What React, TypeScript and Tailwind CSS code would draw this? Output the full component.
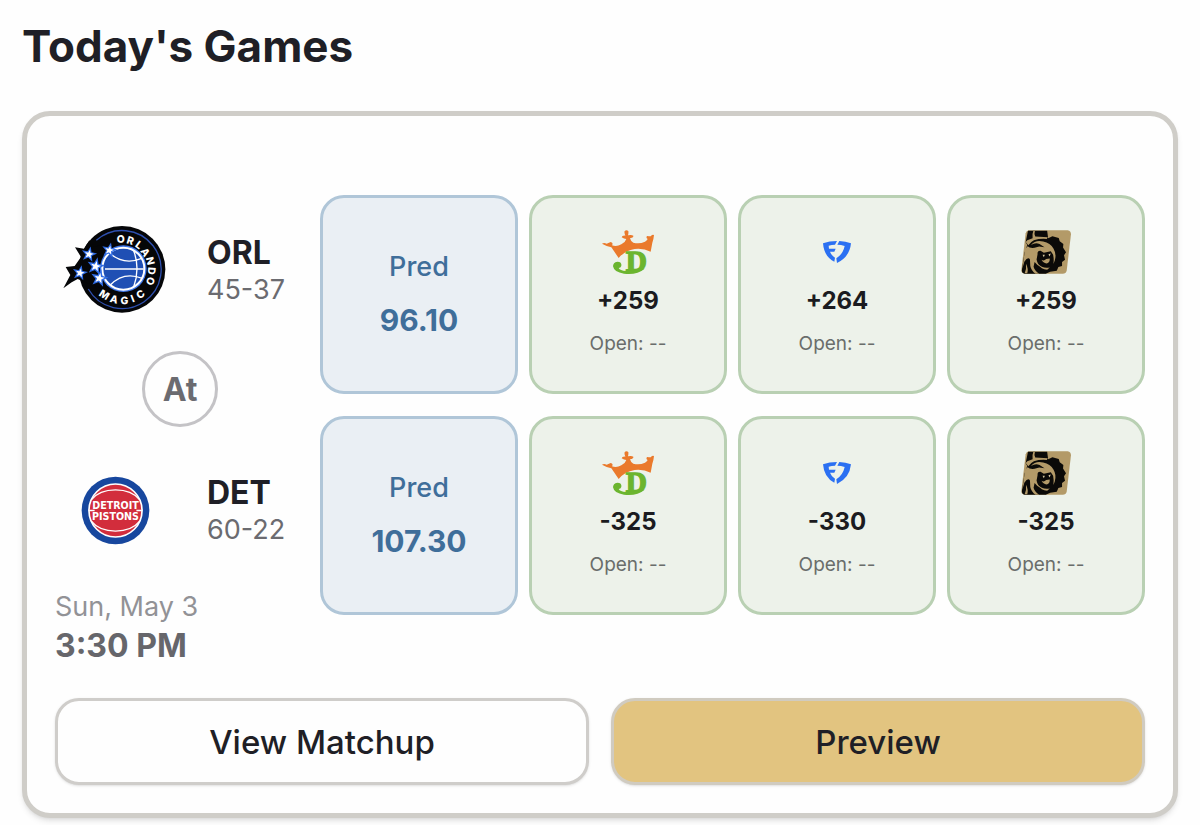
import type { ReactNode } from "react";

const magicLetters: [string, number, number, number][] = [
  ["O", 213, 72, -4],
  ["R", 242, 77, 18],
  ["L", 268, 90, 36],
  ["A", 287, 112, 56],
  ["N", 302, 138, 76],
  ["D", 306, 168, 94],
  ["O", 302, 198, 112],
  ["M", 164, 239, 32],
  ["A", 193, 253, 15],
  ["G", 224, 257, -4],
  ["I", 249, 251, -21],
  ["C", 272, 238, -36],
];

function Star({ x, y, r }: { x: number; y: number; r: number }) {
  return (
    <path
      transform={`translate(${x} ${y}) rotate(12) scale(${r})`}
      d="M0-1 .25-.32 .95-.31 .4.13 .59.81 0 .42-.59.81-.4.13-.95-.31-.25-.32Z"
    />
  );
}

function MagicLogo() {
  return (
    <svg viewBox="40 30 312 270" className="h-[90px] w-26" role="img" aria-label="Orlando Magic">
      <circle cx="217" cy="163" r="130" fill="#050608" />
      <path
        d="M76 97 103 101 119 76 134 96 185 80 185 230 105 201 84 192 66 202 41 220 62 180 48 156 75 153 94 126Z"
        fill="#050608"
      />
      <path d="M140 76A117 117 0 1 1 116 222" fill="none" stroke="#2e4fae" strokeWidth="4" />
      <circle cx="221" cy="161" r="70" fill="#3f78ea" />
      <circle cx="221" cy="161" r="63" fill="#1f4fb4" stroke="#fff" strokeWidth="6" />
      <g fill="none" stroke="#fff" strokeWidth="4">
        <path d="M166 162H282M180 115Q224 152 276 130M182 210Q222 168 278 190M252 107Q272 160 252 216" />
      </g>
      <g fill="#fff" stroke="#2f6ce5" strokeWidth=".5" strokeLinejoin="miter" paintOrder="stroke">
        <Star x={118} y={118} r={14} />
        <Star x={91} y={174} r={14} />
        <Star x={179} y={106} r={14} />
        <Star x={138} y={154} r={16} />
        <Star x={149} y={190} r={16} />
      </g>
      <g fill="#fff" fontFamily="Inter, sans-serif" fontWeight="800" fontSize="31" textAnchor="middle">
        {magicLetters.map(([letter, x, y, angle], i) => (
          <text key={i} transform={`translate(${x} ${y}) rotate(${angle})`} dy="11">
            {letter}
          </text>
        ))}
      </g>
    </svg>
  );
}

function PistonsLogo() {
  return (
    <svg viewBox="29 30 208 208" className="size-[69px]" role="img" aria-label="Detroit Pistons">
      <circle cx="133" cy="134" r="102" fill="#17479e" />
      <circle cx="133" cy="134" r="80" fill="#d22d3c" stroke="#fff" strokeWidth="5" />
      <g fill="none" stroke="#fff" strokeWidth="4">
        <path d="M60 102Q84 72 133 72T206 102M60 166Q84 196 133 196T206 166M52 134H70M196 134H214" />
      </g>
      <g
        fill="#fff"
        fontFamily="'Liberation Sans Narrow', 'DejaVu Sans Condensed', sans-serif"
        fontWeight="700"
        fontSize="32"
        textAnchor="middle"
      >
        <text x="133" y="129">DETROIT</text>
        <text x="133" y="163">PISTONS</text>
      </g>
    </svg>
  );
}

function DraftKingsLogo() {
  return (
    <svg viewBox="0 0 156 132" className="h-11 w-[52px] overflow-visible" role="img" aria-label="DraftKings">
      <path
        d="M0 41Q6 37 14 41L26 36Q35 39 30 46Q44 51 58 43Q70 37 73 27Q66 27 59 22Q60 16 70 17Q66 8 68 3Q73-2 79 3Q80 10 78 16Q88 13 94 17Q96 22 84 25Q86 34 94 38Q112 43 129 35Q136 31 137 27Q131 24 135 18Q141 19 146 19Q150 12 156 15Q155 27 151 38L146 65Q124 54 98 57Q68 62 50 84L28 52Q14 49 0 41Z"
        fill="#ea7a2c"
      />
      <text
        x="103"
        y="123"
        textAnchor="middle"
        fontFamily="'Liberation Serif', serif"
        fontWeight="700"
        fontSize="88"
        fill="#6bb52f"
        stroke="#6bb52f"
        strokeWidth="4"
      >
        D
      </text>
      <path
        d="M58 108Q60 95 46 95Q33 97 33 109Q36 127 66 131Q104 136 128 116L118 114Q98 124 72 123Q54 122 50 114Q56 114 58 108Z"
        fill="#6bb52f"
      />
    </svg>
  );
}

function FanDuelLogo() {
  return (
    <svg viewBox="0 0 84 66" className="h-[22px] w-7" role="img" aria-label="FanDuel">
      <g fill="#2b70f2">
        <path d="M0 7Q19 0 42 0L36 11Q26 11 17 14L18 23H38L34 32H21Q25 43 36 50L34 62Q3 47 0 7Z" />
        <path d="M49 0Q68 1 84 7Q80 48 42 66L40 52Q60 39 65 15Q54 11 43 11Z" />
      </g>
    </svg>
  );
}

function BetMGMLogo() {
  return (
    <svg viewBox="17 15 151 133" className="h-11 w-[50px]" role="img" aria-label="BetMGM">
      <path d="M40 16H158Q168 18 168 28L155 138Q153 147 143 147H28Q17 146 18 136L31 25Q33 17 40 16Z" fill="#b39a68" />
      <path
        d="M38 17H96L99 40 112 34 131 39 134 49 145 57 144 68 153 82 147 91 150 105 141 112 141 124 130 127 125 138 105 141 92 147H28Q18 146 20 134L28 82 36 60 31 52Z"
        fill="#0b0a08"
      />
      <g fill="#b39a68">
        <path d="M59 18Q56 26 60 35L98 37 95 42Q74 40 56 46 46 51 39 61L31 51 36 46 52 40Q50 28 54 18Z" />
        <path d="M28 82Q27 72 37 64 43 71 58 69L72 65 88 67 73 57Q60 52 47 60 61 44 84 50 106 55 115 71 125 88 119 107L115 118Q117 104 114 90L107 79 86 84 76 78Q66 77 67 88L64 104Q67 121 81 129 66 124 58 112L55 126Q58 138 72 147H61Q48 139 45 124L44 104Q38 95 27 111L21 131Z" />
        <path d="M79 105Q86 110 93 103L104 101Q104 115 94 116 84 115 79 105Z" />
        <path d="M68 118Q82 132 104 128L96 135Q78 135 68 118ZM32 117Q34 132 28 146H36Q40 132 32 117Z" />
      </g>
      <path d="M82 90 86 97 89 90ZM100 88 103 95 107 86Z" fill="#d8c8a0" />
    </svg>
  );
}

type Book = { logo: ReactNode; line: string };
type Team = { logo: ReactNode; code: string; record: string; pred: string; books: Book[] };

const teams: Team[] = [
  {
    logo: <MagicLogo />,
    code: "ORL",
    record: "45-37",
    pred: "96.10",
    books: [
      { logo: <DraftKingsLogo />, line: "+259" },
      { logo: <FanDuelLogo />, line: "+264" },
      { logo: <BetMGMLogo />, line: "+259" },
    ],
  },
  {
    logo: <PistonsLogo />,
    code: "DET",
    record: "60-22",
    pred: "107.30",
    books: [
      { logo: <DraftKingsLogo />, line: "-325" },
      { logo: <FanDuelLogo />, line: "-330" },
      { logo: <BetMGMLogo />, line: "-325" },
    ],
  },
];

function TeamRow({ team }: { team: Team }) {
  return (
    <div className="flex h-[90px] items-center gap-8">
      <div className="flex w-[120px] shrink-0 justify-center">{team.logo}</div>
      <div className="pt-0.5">
        <h2 className="text-[32px] leading-[38px] font-bold text-[#1f1f26]">{team.code}</h2>
        <p className="text-[27px] leading-[36px] text-[#6b6b70]">{team.record}</p>
      </div>
    </div>
  );
}

function PredTile({ value }: { value: string }) {
  return (
    <div className="flex h-[199px] flex-col items-center gap-4 rounded-3xl border-3 border-[#b0c6d8] bg-[#eaeff4] pt-[51px]">
      <span className="text-[27px] leading-[36px] font-medium text-[#3f6e9a]">Pred</span>
      <span className="text-[30px] leading-[38px] font-bold text-[#3f6e9a]">{value}</span>
    </div>
  );
}

function OddsTile({ book }: { book: Book }) {
  return (
    <div className="flex h-[199px] flex-col items-center rounded-3xl border-3 border-[#b9d0b3] bg-[#edf2ea] pt-8">
      <div className="flex h-11 items-center">{book.logo}</div>
      <span className="mt-3 text-[24px] leading-[30px] font-bold text-[#1b1b20]">{book.line}</span>
      <span className="mt-4 text-[19px] leading-[24px] text-[#6a6d6b]">Open: --</span>
    </div>
  );
}

export default function App() {
  return (
    <main className="min-h-screen bg-[#fefefe] px-[22px] pt-5 font-['Inter',sans-serif]">
      <h1 className="text-[44px] leading-[52px] font-bold text-[#1f1f26]">Today's Games</h1>
      <article className="mt-[39px] rounded-[28px] border-5 border-[#cfcdc8] bg-[#fefefe] px-7 pt-[79px] pb-7 shadow-md">
        <div className="flex">
          <section className="w-[265px] shrink-0 pt-[30px]">
            <TeamRow team={teams[0]} />
            <div className="mt-9 mb-[38px] ml-[87px] flex size-[76px] items-center justify-center rounded-full border-3 border-[#c4c3c6] pt-0.5 text-[32px] font-bold text-[#6b6b70]">
              At
            </div>
            <TeamRow team={teams[1]} />
            <p className="mt-[34px] text-[27px] leading-[36px] text-[#929296]">Sun, May 3</p>
            <p className="text-[32px] leading-[41px] font-bold text-[#66666b]">3:30 PM</p>
          </section>
          <section className="grid grow grid-cols-4 content-start gap-x-[11px] gap-y-[22px]">
            {teams.flatMap((team) => [
              <PredTile key={team.code} value={team.pred} />,
              ...team.books.map((book, i) => <OddsTile key={team.code + i} book={book} />),
            ])}
          </section>
        </div>
        <div className="mt-8 grid grid-cols-2 gap-[22px]">
          <button className="h-[87px] rounded-3xl border-3 border-[#cfcdca] bg-[#fefefe] pt-0.5 text-[33px] font-medium text-[#1f1f26] shadow-sm">
            View Matchup
          </button>
          <button className="h-[87px] rounded-3xl border-3 border-[#d0cbc0] bg-[#e2c480] pt-0.5 text-[33px] font-medium text-[#1f1f26] shadow-sm">
            Preview
          </button>
        </div>
      </article>
    </main>
  );
}
